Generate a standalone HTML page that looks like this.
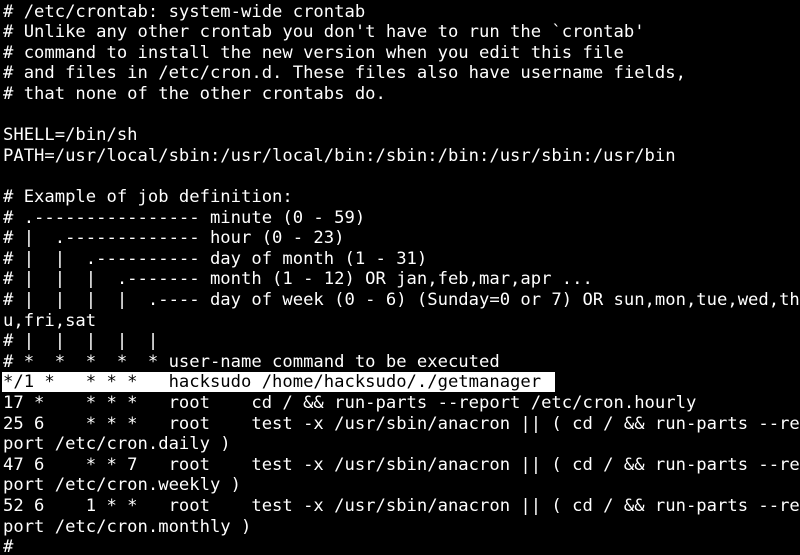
<!DOCTYPE html>
<html><head><style>
html,body{margin:0;padding:0;background:#000;width:800px;height:555px;overflow:hidden}
pre{margin:0;padding:1.7px 0 0 3px;color:#fff;font-family:"DejaVu Sans Mono","Liberation Mono",monospace;font-size:17.2px;line-height:20.6px;white-space:pre}
.h{background:#fff;color:#000;margin-left:-1px;padding:0 14px 0 1px}
</style></head><body><pre># /etc/crontab: system-wide crontab
# Unlike any other crontab you don't have to run the `crontab'
# command to install the new version when you edit this file
# and files in /etc/cron.d. These files also have username fields,
# that none of the other crontabs do.

SHELL=/bin/sh
PATH=/usr/local/sbin:/usr/local/bin:/sbin:/bin:/usr/sbin:/usr/bin

# Example of job definition:
# .---------------- minute (0 - 59)
# |  .------------- hour (0 - 23)
# |  |  .---------- day of month (1 - 31)
# |  |  |  .------- month (1 - 12) OR jan,feb,mar,apr ...
# |  |  |  |  .---- day of week (0 - 6) (Sunday=0 or 7) OR sun,mon,tue,wed,th
u,fri,sat
# |  |  |  |  |
# *  *  *  *  * user-name command to be executed
<span class="h">*/1 *   * * *   hacksudo /home/hacksudo/./getmanager</span>
17 *    * * *   root    cd / &amp;&amp; run-parts --report /etc/cron.hourly
25 6    * * *   root    test -x /usr/sbin/anacron || ( cd / &amp;&amp; run-parts --re
port /etc/cron.daily )
47 6    * * 7   root    test -x /usr/sbin/anacron || ( cd / &amp;&amp; run-parts --re
port /etc/cron.weekly )
52 6    1 * *   root    test -x /usr/sbin/anacron || ( cd / &amp;&amp; run-parts --re
port /etc/cron.monthly )
#
</pre></body></html>
